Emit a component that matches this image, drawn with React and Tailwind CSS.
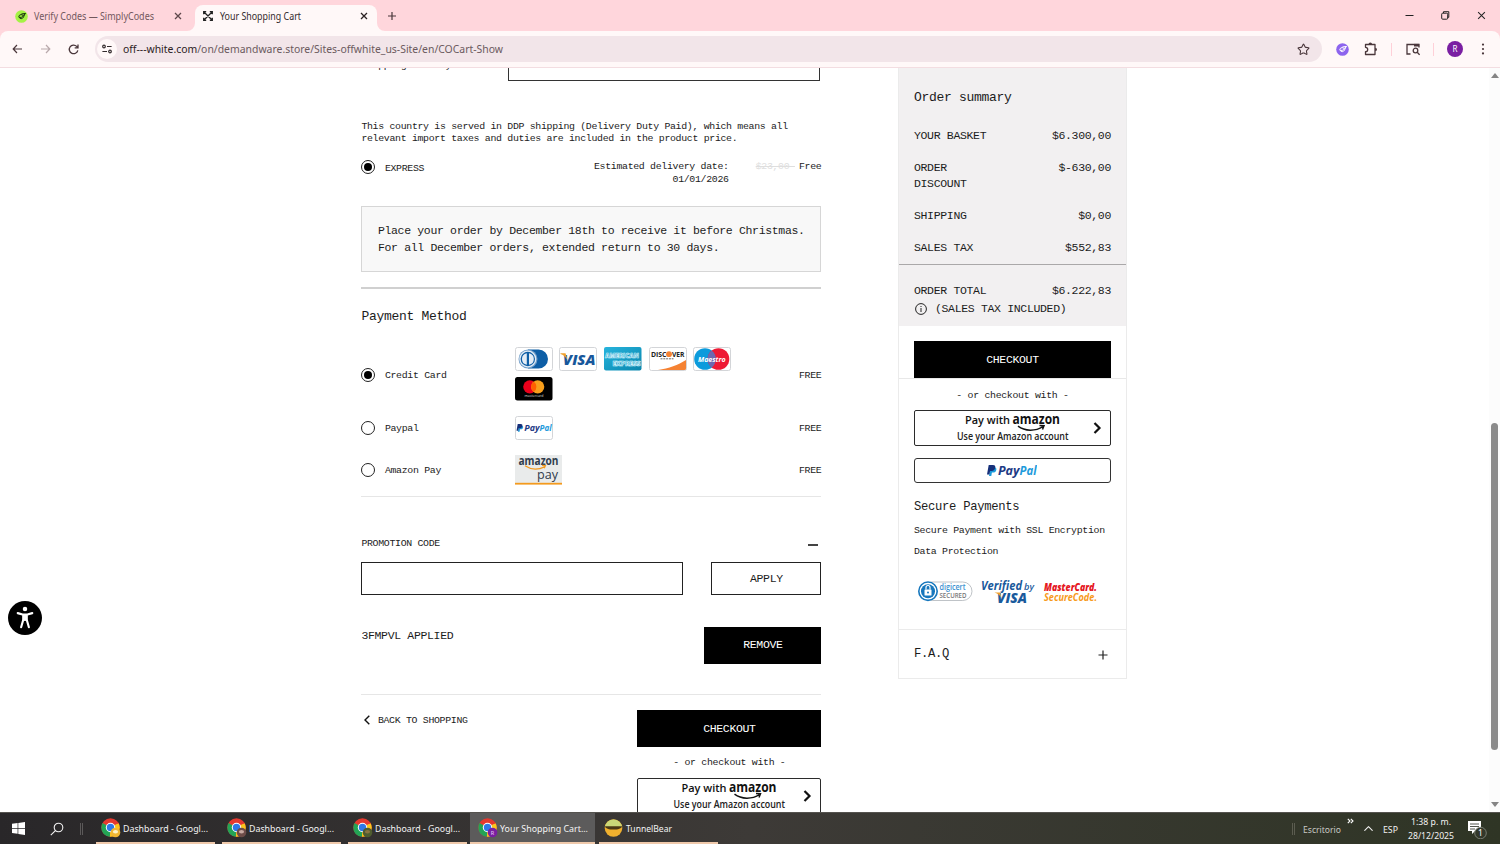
import { Search, Star, ChevronUp } from "lucide-react";

const UI_FONT = "font-['Noto_Sans','Open_Sans',sans-serif]";

// mono type scale
const XS = "text-[9.9px] tracking-[-0.315px]";
const SM = "text-[11.5px] tracking-[-0.336px]";
const MD = "text-[12.2px] tracking-[-0.288px]";
const LG = "text-[13px] tracking-[-0.3px]";

const summaryRows = [
  { label: "YOUR BASKET", value: "$6.300,00" },
  { label: "ORDER DISCOUNT", value: "$-630,00" },
  { label: "SHIPPING", value: "$0,00" },
  { label: "SALES TAX", value: "$552,83" },
];

const taskbarApps = [
  { title: "Dashboard - Googl...", badge: "#f2b632", dot: "#fff3c4" },
  { title: "Dashboard - Googl...", badge: "#6d4c48", dot: "#c9aaa2" },
  { title: "Dashboard - Googl...", badge: "#4f5d2f", dot: "#8a7440" },
];

// text inside logos, squeezed to the width of the mark
function Mark({ x, y, w, size, fill, weight = 700, italic, font = "Open Sans", children }) {
  return (
    <text
      x={x}
      y={y}
      textLength={w}
      lengthAdjust="spacingAndGlyphs"
      fontSize={size}
      fontWeight={weight}
      fontStyle={italic ? "italic" : "normal"}
      fontFamily={`${font}, sans-serif`}
      fill={fill}
      letterSpacing="0"
    >
      {children}
    </text>
  );
}

function UiText({ w, size = 10, fill = "#3b3335", weight = 400, className = "", children }) {
  return (
    <svg width={w} height="18" className={`shrink-0 overflow-visible ${className}`}>
      <Mark x="0" y="12.5" w={w} size={size} fill={fill} weight={weight} font="Noto Sans">
        {children}
      </Mark>
    </svg>
  );
}

/* ---------- browser ---------- */

function CodesLogo({ bg, fg }) {
  return (
    <svg width="13" height="13" viewBox="0 0 13 13">
      <circle cx="6.5" cy="6.5" r="6.3" fill={bg} />
      <path d="M7.6 5A2.300 2 0 1 0 7.800 8C8.800 7 9.200 5.200 10.200 3.600M4.600 7.200l1.600.3L9.800 4M6.800 3.900l3.400-.4" fill="none" stroke={fg} strokeWidth="1" strokeLinecap="round" />
    </svg>
  );
}

function Cross({ size = 8, color = "#3b2f31", width = 1.3 }) {
  return (
    <svg width={size} height={size} viewBox="0 0 8 8">
      <path d="M1 1l6 6M7 1L1 7" stroke={color} strokeWidth={width} />
    </svg>
  );
}

function TabStrip() {
  return (
    <div className="flex h-[31px] shrink-0 items-stretch bg-[#ffd6dc]">
      <div className="flex w-[195px] items-center pl-[15px] pt-px">
        <CodesLogo bg="#a5f245" fg="#17330c" />
        <UiText w={120} fill="#72575c" className="ml-[6px]">Verify Codes — SimplyCodes</UiText>
        <span className="ml-5"><Cross color="#5e474b" /></span>
      </div>
      <div className="relative mt-[5px] flex w-[182px] items-center rounded-t-lg bg-[#fff8f8] pb-[4px] pl-2">
        <svg className="absolute bottom-0 -left-[8px]" width="8" height="8"><path d="M8 0v8H0A8 8 0 0 0 8 0" fill="#fff8f8" /></svg>
        <svg className="absolute bottom-0 -right-[8px]" width="8" height="8"><path d="M0 0v8h8A8 8 0 0 1 0 0" fill="#fff8f8" /></svg>
        <svg width="10" height="10" viewBox="0 0 10 10" fill="none" stroke="#222" strokeWidth="1.3">
          <path d="M1 1l8 8M9 1L1 9M.7 3.200V.7h2.500M6.800.7h2.500v2.500M9.300 6.800v2.500H6.800M3.200 9.300H.7V6.800" />
        </svg>
        <UiText w={81} fill="#352b2d" className="ml-[7px]">Your Shopping Cart</UiText>
        <span className="ml-[59px]"><Cross color="#2b2223" /></span>
      </div>
      <svg className="ml-[10px] mt-[11px]" width="10" height="10"><path d="M5 1v8M1 5h8" stroke="#4a373b" strokeWidth="1.2" /></svg>
      <div className="ml-auto flex items-center gap-[27px] pr-[14px]">
        <svg width="9" height="9"><path d="M.5 4.5h8" stroke="#222" /></svg>
        <svg width="9" height="9" fill="none" stroke="#222"><rect x=".7" y="2.2" width="6" height="6" rx="1" /><path d="M2.5 2V.7h5.3v5.6H6.5" /></svg>
        <Cross size={9} color="#222" width={0.9} />
      </div>
    </div>
  );
}

function Toolbar() {
  return (
    <div className="bg-[#ffd6dc]">
      <div className="flex h-[37px] items-center rounded-t-lg border-b border-[#f3dde1] bg-[#fff8f8] pl-3">
        <svg width="11" height="10" viewBox="0 0 11 10" fill="none" stroke="#4a373b" strokeWidth="1.2"><path d="M10 5H1.300M5 1L1.200 5 5 9" /></svg>
        <svg className="ml-[17px]" width="11" height="10" viewBox="0 0 11 10" fill="none" stroke="#b9a9ac" strokeWidth="1.2"><path d="M1 5h8.700M6 1l3.800 4L6 9" /></svg>
        <svg className="ml-[17px]" width="11" height="11" viewBox="0 0 11 11" fill="none" stroke="#4a373b" strokeWidth="1.3"><path d="M9.800 6.300A4.300 4.300 0 1 1 8.700 2.400L10 3.700M10 .5v3.300H6.700" /></svg>
        <div className="ml-4 flex h-[26px] w-[1227px] items-center rounded-full bg-[#f2e5e9] pl-[2px]">
          <div className="flex h-5 w-5 items-center justify-center rounded-full bg-[#fff8f8]">
            <svg width="10" height="10" viewBox="0 0 10 10" fill="none" stroke="#332b2d" strokeWidth="1.2">
              <circle cx="2" cy="2.5" r="1.3" /><path d="M5 2.5h4.6M.4 7.5H5" /><circle cx="8" cy="7.5" r="1.3" />
            </svg>
          </div>
          <svg width="380" height="18" className="ml-[6px] overflow-visible">
            <text x="0" y="13" fontSize="10.9" textLength="380" lengthAdjust="spacingAndGlyphs" fontFamily="Noto Sans, sans-serif" fill="#6b5a5e">
              <tspan fill="#2c2224">off---white.com</tspan>/on/demandware.store/Sites-offwhite_us-Site/en/COCart-Show
            </text>
          </svg>
          <Star className="ml-auto mr-[12px]" size={13} strokeWidth={2} color="#4a373b" />
        </div>
        <span className="ml-[14px]"><CodesLogo bg="#8d64ee" fg="#fff" /></span>
        <svg className="ml-[15px]" width="14" height="14" viewBox="0 0 14 14" fill="none" stroke="#4a373b" strokeWidth="1.3" strokeLinejoin="round">
          <path d="M1.500 2.500h9.500v10H1.500V9.700a2 2 0 0 0 0-4.400z" /><path d="M5.200 2.300a1.100 1.100 0 0 1 2.200 0M11.200 6.400a1.100 1.100 0 0 1 0 2.200" fill="#4a373b" />
        </svg>
        <span className="ml-[13px] h-[13px] w-px bg-[#ffd0d8]" />
        <svg className="ml-[14px]" width="14" height="13" viewBox="0 0 14 13" fill="none" stroke="#4a373b" strokeWidth="1.3">
          <path d="M4.500 11H1V1.500h12v3" /><path d="M8 2.200h5" strokeWidth="2.6" /><circle cx="9.500" cy="7.500" r="2.300" /><path d="M11.200 9.200l2.400 2.600" />
        </svg>
        <span className="ml-[13px] h-[13px] w-px bg-[#ffd0d8]" />
        <span className="ml-[13px] flex h-4 w-4 items-center justify-center rounded-full bg-[#7a1fa2] text-[8px] text-white">R</span>
        <svg className="ml-[18px]" width="4" height="12" fill="#4a373b"><circle cx="2" cy="1.6" r="1.1" /><circle cx="2" cy="6" r="1.1" /><circle cx="2" cy="10.4" r="1.1" /></svg>
      </div>
    </div>
  );
}

/* ---------- logos ---------- */

function CardFrame({ children }) {
  return (
    <svg width="38" height="24" viewBox="0 0 38 24" className="shrink-0">
      <rect x=".5" y=".5" width="37" height="23" rx="2" fill="#fff" stroke="#d3d5d8" />
      {children}
    </svg>
  );
}

function Diners() {
  return (
    <CardFrame>
      <path d="M13 2.500h10.500a9.500 9.500 0 0 1 0 19H13z" fill="#0d5ea6" />
      <circle cx="13" cy="12" r="9.500" fill="#6f9dc9" />
      <circle cx="12.800" cy="12" r="8.500" fill="#e3ecf5" />
      <circle cx="12.800" cy="12" r="7.200" fill="#0d5ea6" />
      <path d="M11.800 6.200v11.600a5.900 5.900 0 0 1 0-11.600M14 6.200v11.600a5.900 5.900 0 0 0 0-11.600" fill="#e3ecf5" />
    </CardFrame>
  );
}

function Visa() {
  return (
    <CardFrame>
      <Mark x="4" y="17.500" w="32.500" size="14.500" fill="#17579b" weight={800} italic>VISA</Mark>
      <path d="M1.500 6.300h5L8.500 13C6.500 9.500 4.200 7.800 1.500 7z" fill="#f0a02c" />
    </CardFrame>
  );
}

function Amex() {
  return (
    <svg width="38" height="24" viewBox="0 0 38 24" className="shrink-0">
      <defs>
        <linearGradient id="amex" x1="0" y1="0" x2="1" y2="1">
          <stop offset="0" stopColor="#27b4dd" /><stop offset="1" stopColor="#0a86ad" />
        </linearGradient>
      </defs>
      <rect width="37.500" height="23.500" rx="2" fill="url(#amex)" />
      <g stroke="#d7f3fc" strokeWidth=".7">
        <Mark x="1" y="11" w="34" size="7.5" weight={800} fill="#1698c4">AMERICAN</Mark>
        <Mark x="8.500" y="18.500" w="28" size="7.5" weight={800} fill="#1698c4">EXPRESS</Mark>
      </g>
    </svg>
  );
}

function Discover() {
  return (
    <CardFrame>
      <Mark x="2" y="9.800" w="15.500" size="7.500" fill="#222">DISC</Mark>
      <circle cx="20" cy="7.200" r="2.900" fill="#f58233" />
      <Mark x="23" y="9.800" w="12.500" size="7.500" fill="#222">VER</Mark>
      <path d="M11.500 11.800h13" stroke="#555" strokeWidth=".9" strokeDasharray="2 .8" />
      <path d="M37 13v8.500a1.500 1.500 0 0 1-1.500 1.500H9C20 21.500 29 18 37 13" fill="#f58233" />
    </CardFrame>
  );
}

function Maestro() {
  return (
    <CardFrame>
      <circle cx="12" cy="12" r="10.800" fill="#0c9bdc" />
      <circle cx="25.500" cy="12" r="10.800" fill="#ee1a35" />
      <path d="M18.750 3.500a10.800 10.800 0 0 1 0 17a10.800 10.800 0 0 1 0-17" fill="#6f68b0" />
      <Mark x="5" y="15" w="27.500" size="7.800" fill="#fff" italic>Maestro</Mark>
    </CardFrame>
  );
}

function Mastercard() {
  return (
    <svg width="38" height="24" viewBox="0 0 38 24" className="shrink-0">
      <rect width="37.500" height="23.500" rx="2.500" fill="#000" />
      <circle cx="14.800" cy="9.800" r="6.600" fill="#eb001b" />
      <circle cx="22.700" cy="9.800" r="6.600" fill="#f79e1b" />
      <path d="M18.750 4.500a6.600 6.600 0 0 1 0 10.600a6.600 6.600 0 0 1 0-10.600" fill="#ff5f00" />
      <Mark x="9.500" y="20" w="19" size="4" fill="#ddd" weight={400}>mastercard</Mark>
    </svg>
  );
}

function PayPalMark({ x, y, scale = 1 }) {
  return (
    <g transform={`translate(${x} ${y}) scale(${scale})`}>
      <path d="M3.500 2.300h3.700c2 0 2.400 1.400 2.100 2.600C8.900 6.800 7.700 7.500 6 7.500H4.900L4.300 11H2z" fill="#1b9bdc" />
      <path d="M1.700 0h4.200c2.100 0 2.700 1.300 2.300 3C7.700 5 6.400 5.900 4.600 5.900H3.100L2.400 9.600H0z" fill="#16307a" />
      <Mark x="11" y="9.500" w="21.500" size="11.500" fill="#1d3a85" italic weight={700}>Pay</Mark>
      <Mark x="32.500" y="9.500" w="17" size="11.500" fill="#1e9bdc" italic weight={700}>Pal</Mark>
    </g>
  );
}

function AmazonPayLogo() {
  return (
    <svg width="47" height="30" viewBox="0 0 47 30">
      <rect width="47" height="28" fill="#e9ebeb" />
      <rect y="27.800" width="47" height="1.800" fill="#f39a1e" />
      <Mark x="3.500" y="9.500" w="40" size="11.500" fill="#303c4c">amazon</Mark>
      <path d="M10 10.800c6 4 13 4.300 19.500 1M27 10.400l3.400.2-1.200 2.700" fill="none" stroke="#f39a1e" strokeWidth="1.300" />
      <Mark x="22" y="24" w="21" size="13.500" fill="#303c4c" weight={400}>pay</Mark>
    </svg>
  );
}

function AmazonButton() {
  return (
    <button className="flex h-[36px] w-full items-center rounded-[2px] border border-[#2b2b2b] bg-white">
      <svg width="100%" height="34" className="overflow-visible">
        <svg x="50%" overflow="visible">
          <Mark x="-47.500" y="13" w="45" size="11.500" fill="#111" weight={600}>Pay with</Mark>
          <Mark x="0" y="13" w="47.500" size="13.500" fill="#111">amazon</Mark>
          <path d="M5.500 15.200c7 5.300 17.500 5.300 25 .3M27 14.500l4.500.2-1.500 3.800" fill="none" stroke="#111" strokeWidth="1.500" />
          <Mark x="-55.500" y="28.500" w="111.500" size="10" fill="#222" weight={600}>Use your Amazon account</Mark>
        </svg>
        <svg x="100%" overflow="visible">
          <path d="M-15.500 12l5 5-5 5" fill="none" stroke="#111" strokeWidth="2.200" />
        </svg>
      </svg>
    </button>
  );
}

function TrustLogos() {
  return (
    <svg width="186" height="30" viewBox="0 0 186 30" className="ml-[3px]">
      <rect x="6" y="6" width="49" height="18.500" rx="9.250" fill="#fff" stroke="#aeb4b9" strokeWidth=".8" />
      <circle cx="11" cy="15.200" r="9.200" fill="#fff" stroke="#1677bd" strokeWidth="1.600" />
      <circle cx="11" cy="15.200" r="7" fill="#1677bd" />
      <rect x="7.500" y="13.500" width="7" height="6" rx=".6" fill="#fff" />
      <path d="M9 13.500v-2a2 2 0 0 1 4 0v2" fill="none" stroke="#fff" strokeWidth="1.200" />
      <circle cx="11" cy="16.500" r="1" fill="#1677bd" />
      <Mark x="22.500" y="14" w="26" size="8.200" fill="#3b8fd0" weight={600}>digicert</Mark>
      <Mark x="22.500" y="21.500" w="27" size="6.500" fill="#777" weight={600}>SECURED</Mark>
      <Mark x="64" y="13.500" w="41" size="11.500" fill="#1a5a9c" italic>Verified</Mark>
      <Mark x="107" y="13.500" w="10" size="9.500" fill="#1a5a9c" italic weight={600}>by</Mark>
      <Mark x="80" y="26.500" w="30" size="14" fill="#1a5a9c" italic weight={800}>VISA</Mark>
      <path d="M77.500 16.500h5.500l1.500 6c-1-3-3.500-5-7-6" fill="#f0a02c" />
      <Mark x="127" y="14.500" w="53" size="10.500" fill="#e5161d" italic weight={800}>MasterCard.</Mark>
      <Mark x="127" y="25" w="53" size="10.500" fill="#f79a1c" italic weight={700}>SecureCode.</Mark>
    </svg>
  );
}

/* ---------- cart ---------- */

function Radio({ checked }) {
  return (
    <span className="flex h-[14px] w-[14px] shrink-0 items-center justify-center rounded-full border border-[#222] bg-white">
      {checked && <span className="h-2 w-2 rounded-full bg-black" />}
    </span>
  );
}

function PaymentRow({ label, checked, className, logosClass = "", children }) {
  return (
    <div className={`flex items-center ${className}`}>
      <Radio checked={checked} />
      <span className="ml-[9.500px] w-[130px] pt-px">{label}</span>
      <div className={`flex w-[230px] flex-wrap gap-x-[6.600px] gap-y-[5.500px] ${logosClass}`}>{children}</div>
      <span className="ml-auto pt-px">FREE</span>
    </div>
  );
}

function CartForm() {
  return (
    <section className={`w-[460px] shrink-0 leading-[12.2px] ${XS}`}>
      <div className="-mt-5 flex h-[33px]">
        <span className="pt-[12px]">Shipping Country</span>
        <div className="ml-auto mr-px w-[312px] border border-[#333]" />
      </div>
      <p className="mt-[39.500px]">
        This country is served in DDP shipping (Delivery Duty Paid), which means all relevant import taxes and duties are included in the product price.
      </p>
      <div className="mt-[15.500px] flex h-[25px]">
        <Radio checked />
        <span className="ml-[9.500px] pt-[3px]">EXPRESS</span>
        <span className="ml-auto mr-[27px] w-[150px] pt-[1px] text-right">Estimated delivery date: 01/01/2026</span>
        <span className="whitespace-pre pt-[1px] text-[#dedede] line-through">{"$23,00 "}</span>
        <span className="ml-[4px] pt-[1px]">Free</span>
      </div>
      <div className={`mt-[21px] h-[66px] border border-[#d6d6d6] bg-[#f8f8f8] pl-[15.500px] pt-[16px] leading-[16.4px] ${SM}`}>
        Place your order by December 18th to receive it before Christmas.
        <br />
        For all December orders, extended return to 30 days.
      </div>
      <div className="mt-[15px] h-[2px] bg-[#d0d0d0]" />
      <h2 className={`mt-[19px] leading-[18px] ${LG}`}>Payment Method</h2>

      <PaymentRow label="Credit Card" checked className="mt-[22px] h-[54px]" logosClass="-mt-[3px]">
        <Diners />
        <Visa />
        <Amex />
        <Discover />
        <Maestro />
        <Mastercard />
      </PaymentRow>
      <PaymentRow label="Paypal" className="mt-[14px] h-[24px]">
        <CardFrame><PayPalMark x={1.5} y={8} scale={0.71} /></CardFrame>
      </PaymentRow>
      <PaymentRow label="Amazon Pay" className="mt-[15px] h-[30px]">
        <AmazonPayLogo />
      </PaymentRow>
      <hr className="mt-[11px] border-[#e6e6e6]" />

      <div className="mt-[40.500px] flex items-center justify-between">
        <span>PROMOTION CODE</span>
        <span className="mr-[3px] mt-[2px] h-[1.500px] w-[10px] bg-[#444]" />
      </div>
      <div className="mt-[11.500px] flex h-[33px] justify-between">
        <input className="w-[322px] border border-[#222]" />
        <button className={`w-[110px] border border-[#222] pt-px ${SM}`}>APPLY</button>
      </div>
      <div className={`mt-[32px] flex h-[37px] justify-between ${SM}`}>
        <span className="pt-[3px]">3FMPVL APPLIED</span>
        <button className="w-[117px] bg-black text-white">REMOVE</button>
      </div>
      <hr className="mt-[30px] border-[#e6e6e6]" />
      <div className="mt-[15px] flex justify-between">
        <div className="flex h-5 items-center pl-[3px]">
          <svg width="6" height="10" viewBox="0 0 6 10" fill="none" stroke="#111" strokeWidth="1.400"><path d="M5.300.7L1 5l4.300 4.300" /></svg>
          <span className="ml-[7.500px] pt-[2px]">BACK TO SHOPPING</span>
        </div>
        <div className="w-[184px]">
          <button className={`h-[37px] w-full bg-black pt-px text-white ${SM}`}>CHECKOUT</button>
          <p className="mb-[8.500px] mt-[10.500px] text-center">- or checkout with -</p>
          <AmazonButton />
        </div>
      </div>
    </section>
  );
}

function OrderSummary() {
  return (
    <aside className={`ml-[76.600px] h-[611px] w-[229px] shrink-0 border-x border-b border-[#ebebeb] leading-[12.2px] ${XS}`}>
      <div className={`h-[258px] bg-[#f2f0f1] leading-[16.4px] ${SM}`}>
        <div className="h-[197px] border-b border-[#aaa8a9] px-[15px] pt-[20.500px]">
          <h2 className={`mb-[21px] leading-[18px] ${LG}`}>Order summary</h2>
          <div className="flex flex-col gap-[15.600px]">
            {summaryRows.map((row) => (
              <div key={row.label} className="flex items-start justify-between">
                <span className="w-[90px]">{row.label}</span>
                <span>{row.value}</span>
              </div>
            ))}
          </div>
        </div>
        <div className="px-[15px] pt-[18px]">
          <div className="flex justify-between">
            <span>ORDER TOTAL</span>
            <span>$6.222,83</span>
          </div>
          <div className="mt-[1.500px] flex items-center">
            <svg className="ml-[1px] mr-[8px]" width="12" height="12" fill="none" stroke="#222"><circle cx="6" cy="6" r="5.400" /><path d="M6 5v4M6 3v1" /></svg>
            (SALES TAX INCLUDED)
          </div>
        </div>
      </div>
      <div className="border-b border-[#e8e8e8] px-[15px] pt-[15px]">
        <button className={`h-[37px] w-full bg-black pt-px text-white ${SM}`}>CHECKOUT</button>
      </div>
      <div className="h-[251px] border-b border-[#ebebeb] px-[15px] pt-[10.500px]">
        <p className="mb-[8.500px] text-center">- or checkout with -</p>
        <AmazonButton />
        <button className="mt-[12px] flex h-[25px] w-full items-center justify-center rounded-[3px] border border-[#333] bg-white">
          <svg width="50" height="14"><PayPalMark x={0} y={1} /></svg>
        </button>
        <h3 className={`mt-[16px] leading-[16px] ${MD}`}>Secure Payments</h3>
        <p className="mt-[9.500px]">Secure Payment with SSL Encryption</p>
        <p className="mt-[9.500px]">Data Protection</p>
        <div className="mt-[17px]"><TrustLogos /></div>
      </div>
      <div className={`flex h-[48px] items-center justify-between px-[15px] pt-px ${MD}`}>
        <span>F.A.Q</span>
        <svg className="mr-[3px]" width="10" height="10"><path d="M5 .5v9M.5 5h9" stroke="#222" strokeWidth="1.200" /></svg>
      </div>
    </aside>
  );
}

/* ---------- taskbar ---------- */

function ChromeIcon({ badge, dot, letter }) {
  return (
    <svg width="20" height="20" viewBox="0 0 20 20" className="shrink-0">
      <circle cx="9.500" cy="9.500" r="9.200" fill="#e5392f" />
      <path d="M9.500 9.500L1.500 5a9.200 9.200 0 0 0 7.400 13.700z" fill="#23a455" />
      <path d="M9.500 9.500L17.500 5a9.200 9.200 0 0 1-8.600 13.700z" fill="#fbc51c" />
      <path d="M9.500 5.200h8.200" stroke="#e5392f" strokeWidth="1" />
      <circle cx="9.500" cy="9.500" r="4.700" fill="#fff" />
      <circle cx="9.500" cy="9.500" r="3.700" fill="#2f78e8" />
      <circle cx="14.500" cy="14.500" r="4.800" fill={badge} />
      {dot && <ellipse cx="14.500" cy="13.800" rx="2.600" ry="1.700" fill={dot} />}
      {letter && <text x="14.500" y="16.500" fontSize="5.500" textAnchor="middle" fill="#e8c8f5">{letter}</text>}
    </svg>
  );
}

function TaskButton({ title, w, active, icon }) {
  return (
    <div className={`flex h-full items-center border-b-2 border-[#efc9ab] pl-[5px] ${active ? "w-[125px] bg-[#5c5b5b] pl-[8px]" : "w-[119px]"}`}>
      {icon}
      <UiText w={w} size={9.8} fill="#f4f4f4" className="ml-[2px]">{title}</UiText>
    </div>
  );
}

function Taskbar() {
  return (
    <footer className="flex h-8 shrink-0 items-center border-t border-[#55534f] bg-linear-to-r from-[#292729] via-[#3d3a37] to-[#2f3525]">
      <svg className="ml-3" width="13" height="13" viewBox="0 0 13 13" fill="#fff"><path d="M0 1.800L5.600 1v5H0zM6.300.9L13 0v6H6.300zM0 6.800h5.600v5L0 11zM6.300 6.800H13V13l-6.700-.9z" /></svg>
      <svg className="ml-[25px]" width="14" height="14" viewBox="0 0 14 14" fill="none" stroke="#f2f2f2" strokeWidth="1.100"><circle cx="8.500" cy="5.500" r="4.300" /><path d="M5.400 8.600L.8 13.200" /></svg>
      <span className="ml-[16px] h-3 w-[3px] border-x border-[#5b5959]" />
      <div className="ml-[13px] flex h-full gap-[7px]">
        {taskbarApps.map((app, i) => (
          <TaskButton key={i} title={app.title} w={85} icon={<ChromeIcon badge={app.badge} dot={app.dot} />} />
        ))}
        <div className="-ml-[4px] flex h-full gap-[4px]">
          <TaskButton title="Your Shopping Cart..." w={88} active icon={<ChromeIcon badge="#7a1fa2" letter="R" />} />
          <TaskButton
            title="TunnelBear"
            w={46}
            icon={
              <svg width="20" height="20" viewBox="0 0 20 20">
                <circle cx="9.500" cy="10" r="8.800" fill="#f0b02e" />
                <path d="M.8 9a8.800 8.800 0 0 1 17.400 0z" fill="#c9d879" />
                <path d="M1 8.200h17c0 4.500-17 4.500-17 0" fill="#4b3a16" />
              </svg>
            }
          />
        </div>
      </div>
      <div className="ml-auto flex h-full items-center">
        <span className="h-3 w-[3px] border-x border-[#5b5c50]" />
        <UiText w={38} size={9.8} fill="#c9c9c4" className="ml-[8px]">Escritorio</UiText>
        <svg className="-mt-[15px] ml-[6px]" width="7" height="6" fill="none" stroke="#fff" strokeWidth="1.100"><path d="M.8.8L3 3 .8 5.200M3.800.8L6 3 3.800 5.200" /></svg>
        <ChevronUp className="ml-[7px]" size={15} strokeWidth={1.8} color="#eee" />
        <UiText w={15} size={9.8} fill="#f2f2f2" className="ml-[7px]">ESP</UiText>
        <div className="-mt-px ml-[9px] mr-px flex w-[47px] flex-col items-center">
          <UiText w={40} size={9.8} fill="#f2f2f2" className="-mb-[4px]">1:38 p. m.</UiText>
          <UiText w={46} size={9.8} fill="#f2f2f2">28/12/2025</UiText>
        </div>
        <svg className="ml-[12px] mr-[13px]" width="20" height="20" viewBox="0 0 20 20">
          <path d="M1 2h13v10H8l-3 3v-3H1z" fill="#fff" />
          <path d="M3 5h9M3 7.500h9M3 10h5" stroke="#40443a" strokeWidth=".9" />
          <circle cx="13.500" cy="14" r="5.800" fill="#33382b" stroke="#8c9085" strokeWidth=".8" />
          <text x="13.500" y="17" fontSize="8.500" textAnchor="middle" fill="#fff">1</text>
        </svg>
      </div>
    </footer>
  );
}

export default function App() {
  return (
    <div className={`relative flex h-[844px] w-[1500px] flex-col overflow-hidden bg-white ${UI_FONT}`}>
      <TabStrip />
      <Toolbar />
      <div className="flex min-h-0 flex-1 overflow-hidden">
        <main className="flex flex-1 items-start pl-[361.400px] font-['Liberation_Mono',monospace] text-[#1c1c1c]">
          <CartForm />
          <OrderSummary />
        </main>
        <div className="flex w-[11px] shrink-0 flex-col items-center bg-[#fcfcfc] pb-[5px] pt-[5px]">
          <svg width="8" height="5"><path d="M0 5l4-5 4 5z" fill="#858585" /></svg>
          <span className="mt-[345px] h-[327px] w-[7px] rounded-full bg-[#8b8b8b]" />
          <svg className="mt-auto" width="8" height="5"><path d="M0 0l4 5 4-5z" fill="#858585" /></svg>
        </div>
      </div>
      <Taskbar />

      {/* accessibility widget floats over the page */}
      <svg className="absolute left-[8px] top-[601px]" width="34" height="34" viewBox="0 0 35 35">
        <circle cx="17.500" cy="17.500" r="17.500" fill="#000" />
        <circle cx="17.500" cy="8.300" r="2.300" fill="#fff" />
        <path d="M10 12.500l5 1.500h5l5-1.500M15.800 14v5l-2.300 8M19.200 14v5l2.300 8" fill="none" stroke="#fff" strokeWidth="2.200" strokeLinecap="round" strokeLinejoin="round" />
        <path d="M15 13.500h5v7h-5z" fill="#fff" />
      </svg>
    </div>
  );
}
